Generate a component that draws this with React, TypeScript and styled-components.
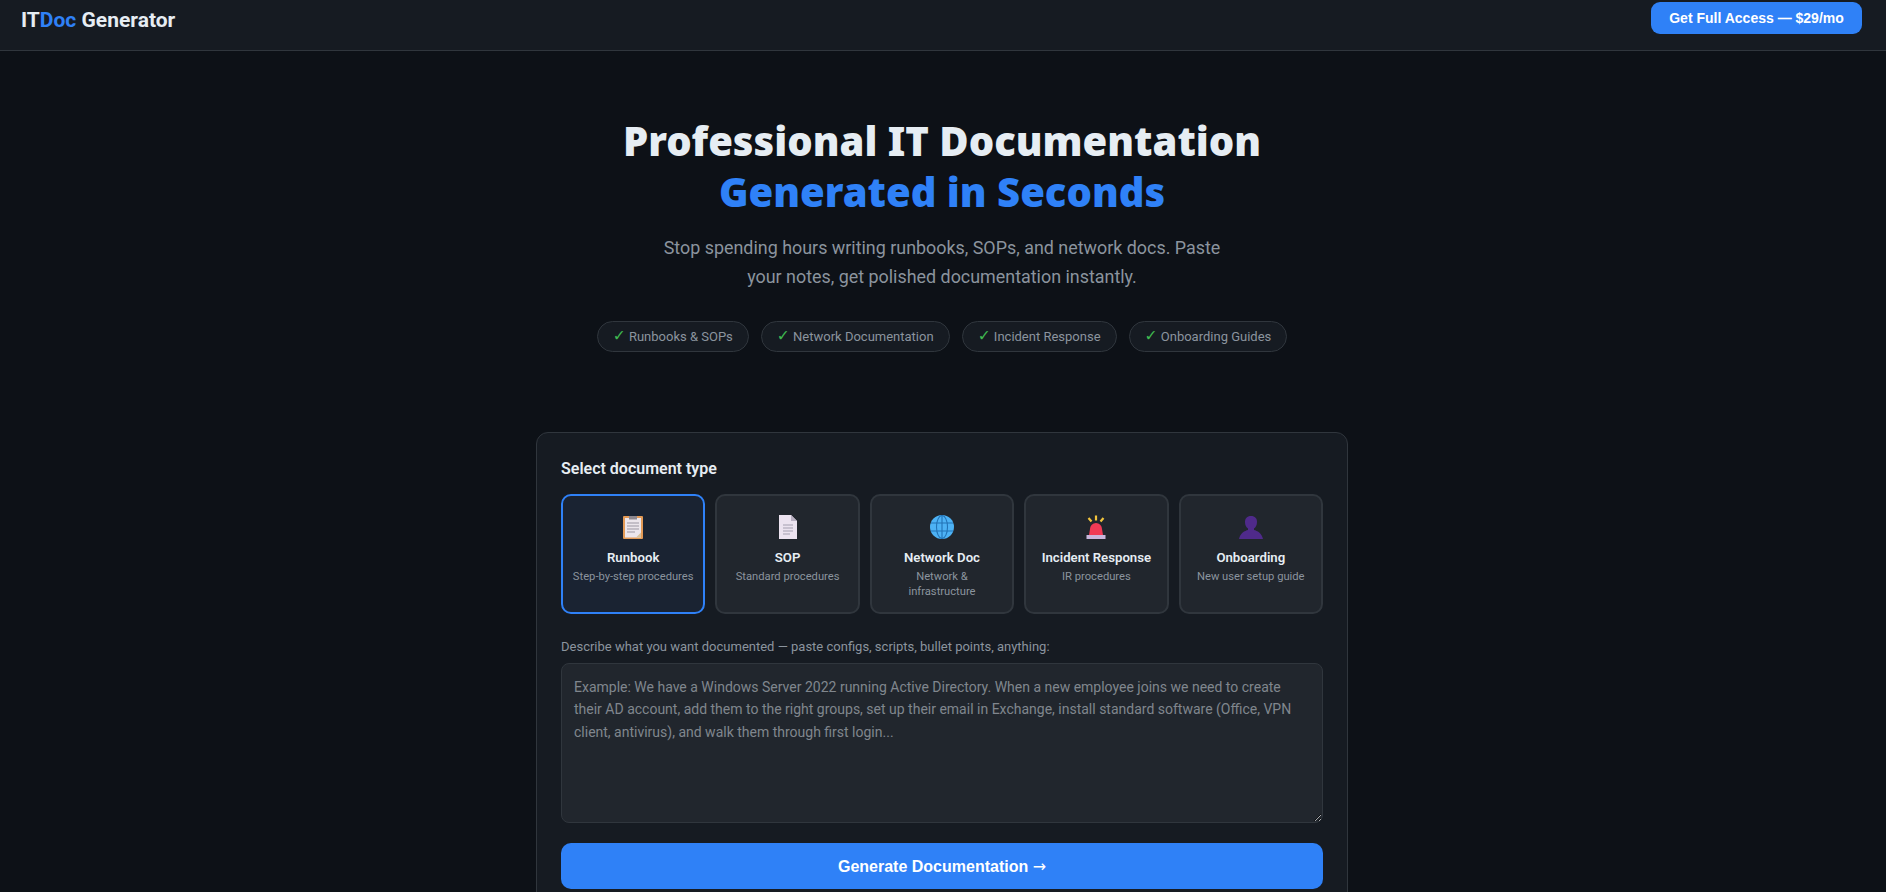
import { FC } from 'react';
import styled, { createGlobalStyle } from 'styled-components';

const GlobalStyle = createGlobalStyle`
  * {
    box-sizing: border-box;
  }
  html, body {
    margin: 0;
    height: 100%;
    overflow: hidden;
    background: #0d1117;
  }
  body {
    color: #e6edf3;
    font-family: Roboto, "Noto Sans", sans-serif;
  }
`;

const NavBar = styled.header`
  display: flex;
  justify-content: space-between;
  align-items: flex-start;
  height: 51px;
  padding: 2px 24px 0 21px;
  background: #161b22;
  border-bottom: 1px solid #30363d;
`;

const Logo = styled.div`
  margin-top: 3px;
  font-size: 21px;
  line-height: 30px;
  font-weight: 700;
  color: #e6edf3;

  span {
    color: #2f81f7;
  }
`;

const AccessButton = styled.button`
  width: 211px;
  height: 32px;
  border: none;
  border-radius: 9px;
  background: #2f81f7;
  color: #fff;
  font-family: "Liberation Sans", Arial, sans-serif;
  font-size: 14px;
  font-weight: 700;
`;

const Content = styled.div`
  padding-right: 2px;
`;

const Hero = styled.section`
  display: flex;
  flex-direction: column;
  align-items: center;
  padding-top: 65px;
  text-align: center;
`;

const Title = styled.h1`
  margin: 0;
  font-family: "Noto Sans", sans-serif;
  font-size: 40px;
  line-height: 50.5px;
  font-weight: 900;
  color: #e6edf3;

  span {
    display: block;
    color: #2f81f7;
  }
`;

const Lead = styled.p`
  width: 580px;
  margin: 16px 0 0;
  font-size: 17.9px;
  line-height: 29px;
  color: #8b949e;
`;

const PillRow = styled.div`
  display: flex;
  justify-content: center;
  gap: 12px;
  margin-top: 30px;
`;

const Pill = styled.div`
  height: 31px;
  padding: 0 15px;
  border: 1px solid #30363d;
  border-radius: 16px;
  background: #161b22;
  color: #8b949e;
  font-size: 13px;
  line-height: 29px;
  white-space: nowrap;

  b {
    font-family: "DejaVu Sans", sans-serif;
    font-size: 15.5px;
    font-weight: 400;
    color: #3fb950;
  }
`;

const Card = styled.main`
  width: 812px;
  margin: 80px auto 0;
  padding: 24px;
  border: 1px solid #30363d;
  border-radius: 12px;
  background: #161b22;
`;

const CardTitle = styled.h2`
  margin: 0 0 13px;
  font-size: 16px;
  line-height: 24px;
  font-weight: 600;
  color: #e6edf3;
`;

const TypeGrid = styled.div`
  display: grid;
  grid-template-columns: repeat(5, 1fr);
  gap: 10px;
`;

const TypeCard = styled.div<{ $active?: boolean }>`
  display: flex;
  flex-direction: column;
  align-items: center;
  height: 120px;
  padding: 19px 8px 0;
  border: 2px solid ${(p) => (p.$active ? '#2f81f7' : '#30363d')};
  border-radius: 10px;
  background: ${(p) => (p.$active ? '#1a2332' : '#21262d')};
  text-align: center;
`;

const TypeIcon = styled.svg`
  display: block;
  width: 24px;
  height: 24px;
  flex: none;
`;

const TypeName = styled.div`
  margin-top: 9px;
  font-size: 13.2px;
  line-height: 20px;
  font-weight: 600;
  color: #e6edf3;
`;

const TypeHint = styled.div`
  margin-top: 1px;
  font-size: 11.2px;
  line-height: 15px;
  color: #8b949e;
  white-space: pre-line;
`;

const FieldLabel = styled.label`
  display: block;
  margin: 23px 0 6px;
  font-size: 13px;
  line-height: 20px;
  color: #8b949e;
`;

const Notes = styled.textarea`
  display: block;
  width: 100%;
  height: 160px;
  padding: 12px;
  border: 1px solid #30363d;
  border-radius: 8px;
  background: #21262d;
  color: #e6edf3;
  font-family: Roboto, "Noto Sans", sans-serif;
  font-size: 14px;
  line-height: 22.4px;
  resize: vertical;

  &::placeholder {
    color: #80868d;
    opacity: 1;
  }
`;

const GenerateButton = styled.button`
  display: block;
  width: 100%;
  height: 46px;
  margin-top: 20px;
  border: none;
  border-radius: 10px;
  background: #2f81f7;
  color: #fff;
  font-family: "Liberation Sans", Arial, sans-serif;
  font-size: 16px;
  font-weight: 700;

  span {
    font-family: "DejaVu Sans", sans-serif;
    font-weight: 400;
  }
`;

const ClipboardIcon = () => (
  <TypeIcon viewBox="0 0 24 24">
    <rect x="2" y="1" width="20" height="23" rx="1" fill="#e39a56" />
    <rect x="4" y="3" width="16" height="19.5" fill="#ece6ec" />
    <rect x="8" y="1" width="8" height="3.5" fill="#8d8890" />
    <path d="M6 8h12M6 11h12M6 14h12M6 17h8" stroke="#9c97a3" strokeWidth="1" />
    <path d="M15 22.500l5-5v5z" fill="#d8c39f" />
  </TypeIcon>
);

const PageIcon = () => (
  <TypeIcon viewBox="0 0 24 24">
    <path d="M3 0h12l6 6v18H3z" fill="#ece3f0" />
    <path d="M15 0l6 6h-6z" fill="#b9b0c2" />
    <path d="M7 10h10M7 13h10M7 16h10M7 19h7" stroke="#a49fb0" strokeWidth="1" />
  </TypeIcon>
);

const GlobeIcon = () => (
  <TypeIcon viewBox="0 0 24 24">
    <circle cx="12" cy="12" r="12" fill="#4db2f5" />
    <g fill="none" stroke="#2272b5" strokeWidth="1.1">
      <ellipse cx="12" cy="12" rx="5.500" ry="11.500" />
      <path d="M12 0.500v23M1 8h22M1 16h22" />
    </g>
  </TypeIcon>
);

const SirenIcon = () => (
  <TypeIcon viewBox="0 0 24 24">
    <path d="M12 0.500v5M4.500 3l3 3.500M19.500 3l-3 3.500" stroke="#f2c43d" strokeWidth="2.200" />
    <path d="M5 20l1-6a6 6 0 0 1 12 0l1 6z" fill="#f03a55" />
    <rect x="2.500" y="20" width="19" height="4" fill="#c9b6dc" />
  </TypeIcon>
);

const BustIcon = () => (
  <TypeIcon viewBox="0 0 24 24">
    <path
      d="M12 1c4 0 6 2.500 6 6 0 3-1.300 5.400-3 6.600v1.400c3.200.8 7.800 3 9 9H0c1.200-6 5.800-8.200 9-9v-1.400c-1.700-1.200-3-3.600-3-6.600 0-3.500 2-6 6-6z"
      fill="#4f2a8a"
    />
  </TypeIcon>
);

type DocType = {
  name: string;
  hint: string;
  Icon: FC;
};

const docTypes: DocType[] = [
  { name: 'Runbook', hint: 'Step-by-step procedures', Icon: ClipboardIcon },
  { name: 'SOP', hint: 'Standard procedures', Icon: PageIcon },
  { name: 'Network Doc', hint: 'Network &\ninfrastructure', Icon: GlobeIcon },
  { name: 'Incident Response', hint: 'IR procedures', Icon: SirenIcon },
  { name: 'Onboarding', hint: 'New user setup guide', Icon: BustIcon },
];

const features = ['Runbooks & SOPs', 'Network Documentation', 'Incident Response', 'Onboarding Guides'];

const placeholder =
  'Example: We have a Windows Server 2022 running Active Directory. When a new employee joins we need to create their AD account, add them to the right groups, set up their email in Exchange, install standard software (Office, VPN client, antivirus), and walk them through first login...';

export default function App() {
  return (
    <>
      <GlobalStyle />
      <NavBar>
        <Logo>
          IT<span>Doc</span> Generator
        </Logo>
        <AccessButton>Get Full Access — $29/mo</AccessButton>
      </NavBar>
      <Content>
        <Hero>
          <Title>
            Professional IT Documentation
            <span>Generated in Seconds</span>
          </Title>
          <Lead>
            Stop spending hours writing runbooks, SOPs, and network docs. Paste your notes, get polished documentation
            instantly.
          </Lead>
          <PillRow>
            {features.map((item) => (
              <Pill key={item}>
                <b>✓</b> {item}
              </Pill>
            ))}
          </PillRow>
        </Hero>
        <Card>
          <CardTitle>Select document type</CardTitle>
          <TypeGrid>
            {docTypes.map(({ name, hint, Icon }, i) => (
              <TypeCard key={name} $active={i === 0}>
                <Icon />
                <TypeName>{name}</TypeName>
                <TypeHint>{hint}</TypeHint>
              </TypeCard>
            ))}
          </TypeGrid>
          <FieldLabel htmlFor="notes">Describe what you want documented — paste configs, scripts, bullet points, anything:</FieldLabel>
          <Notes id="notes" placeholder={placeholder} />
          <GenerateButton>
            Generate Documentation <span>→</span>
          </GenerateButton>
        </Card>
      </Content>
    </>
  );
}
